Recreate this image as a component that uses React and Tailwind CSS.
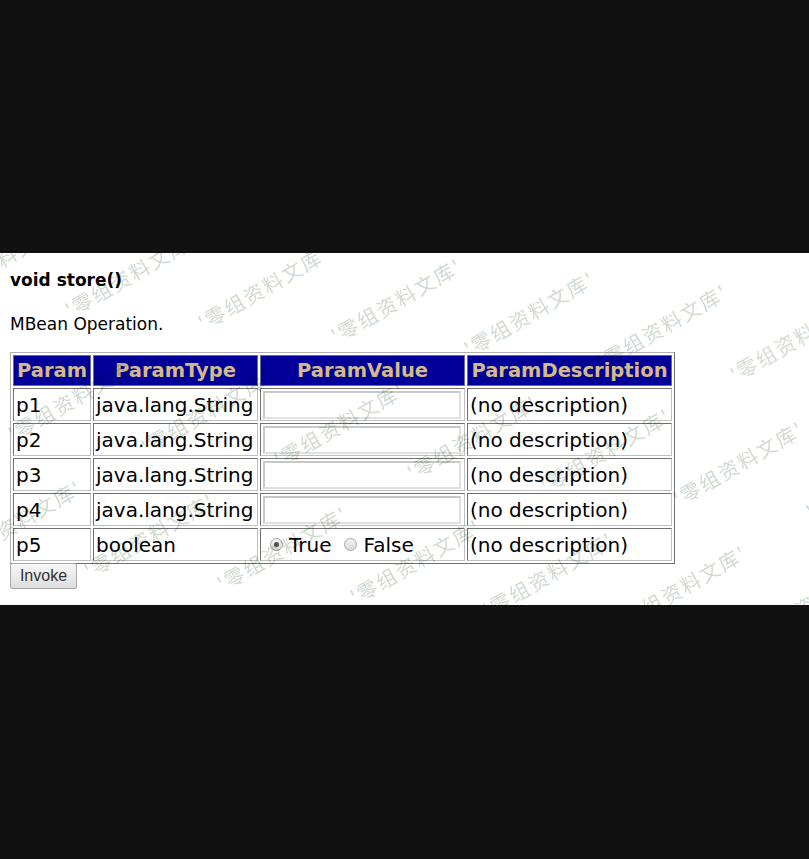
import React from 'react';

const rows = [
  { name: 'p1', type: 'java.lang.String' },
  { name: 'p2', type: 'java.lang.String' },
  { name: 'p3', type: 'java.lang.String' },
  { name: 'p4', type: 'java.lang.String' },
  { name: 'p5', type: 'boolean' },
];

// watermark lattice, start point of each label (white-area coords)
const marks = [];
for (let r = -1; r < 4; r++) {
  for (let k = -3; k < 8; k++) {
    const x = 72 + r * 76 + k * 133;
    const y = 320 - 253 + r * 137 + k * 13;
    if (x > -180 && x < 820 && y > -20 && y < 520) marks.push({ x, y });
  }
}

const Watermarks = () => (
  <div className="pointer-events-none absolute inset-0 mix-blend-multiply">
    {marks.map((m, i) => (
      <span
        key={i}
        className="absolute origin-bottom-left -rotate-30 whitespace-nowrap text-[20px] leading-[20px] tracking-[2px] text-[#d0dbd0] font-['Noto_Sans_CJK_SC',sans-serif]"
        style={{ left: m.x, top: m.y - 20 }}
      >
        '零组资料文库'
      </span>
    ))}
  </div>
);

const Radio = ({ checked }) => (
  <span className="inline-flex h-[13px] w-[13px] items-center justify-center rounded-full border border-[#a8a8a8] bg-gradient-to-b from-[#f2f2f2] to-[#d8d8d8]">
    {checked && <span className="h-[5px] w-[5px] rounded-full bg-[#555]" />}
  </span>
);

const cell = 'border border-t-[#707070] border-l-[#707070] border-r-[#c0c0c0] border-b-[#c0c0c0] px-[2px]';

export default function App() {
  return (
    <div className="flex h-[859px] w-[809px] flex-col bg-[#111] font-['DejaVu_Sans',sans-serif] text-black">
      <div className="h-[253px] shrink-0" />
      <div className="relative h-[352px] shrink-0 overflow-hidden bg-white pl-[10px]">
        <h3 className="mt-[17px] text-[17px] font-bold leading-[20px]">void store()</h3>
        <p className="mt-[24px] text-[17px] leading-[20px]">MBean Operation.</p>

        <table className="mt-[18px] border-separate border-spacing-[2px] border border-t-[#b0b0b0] border-l-[#b0b0b0] border-r-[#707070] border-b-[#707070]">
          <thead>
            <tr className="h-[31px] bg-[#000099] text-[19.5px] font-bold text-[#d6b98a]">
              <th className="w-[78px] border border-[#6a6a9a] px-0">Param</th>
              <th className="w-[165px] border border-[#6a6a9a] px-[1px]">ParamType</th>
              <th className="w-[205px] border border-[#6a6a9a] px-[1px]">ParamValue</th>
              <th className="w-[205px] border border-[#6a6a9a] px-[1px]">ParamDescription</th>
            </tr>
          </thead>
          <tbody className="text-[20px]">
            {rows.map((r) => (
              <tr key={r.name} className="h-[33px]">
                <td className={cell}>{r.name}</td>
                <td className={cell}>{r.type}</td>
                <td className={cell}>
                  {r.type === 'boolean' ? (
                    <div className="flex items-center pl-[7px]">
                      <Radio checked />
                      <span className="ml-[6px]">True</span>
                      <span className="ml-[13px] flex"><Radio /></span>
                      <span className="ml-[6px]">False</span>
                    </div>
                  ) : (
                    <input
                      type="text"
                      className="block h-[28px] w-[198px] border-2 border-t-[#c8c8c8] border-l-[#c8c8c8] border-r-[#e0e0e0] border-b-[#e0e0e0] bg-transparent outline-none"
                    />
                  )}
                </td>
                <td className={cell}>(no description)</td>
              </tr>
            ))}
          </tbody>
        </table>

        <button className="-mt-[1px] block h-[26px] w-[67px] rounded-[2px] border border-[#a9a9a9] bg-gradient-to-b from-[#f6f6f6] to-[#dedede] font-['Liberation_Sans',sans-serif] text-[16px] text-[#333]">
          Invoke
        </button>

        <Watermarks />
      </div>
      <div className="flex-1" />
    </div>
  );
}
